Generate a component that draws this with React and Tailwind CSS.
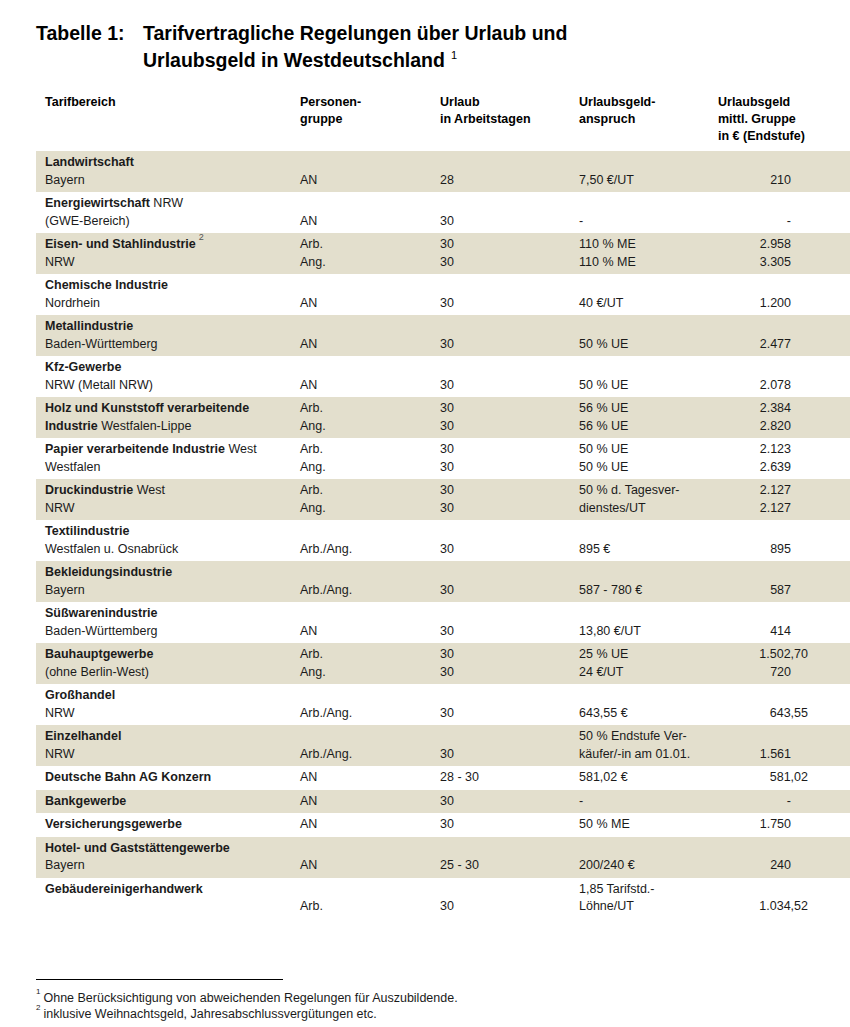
import React from "react";

const B = ({ children }) => <span className="font-bold">{children}</span>;
const Sup = ({ children }) => (
  <sup className="text-[9px] font-normal text-[#555] align-[4px] ml-[3px]">{children}</sup>
);

// each row: list of lines, each line = [tarif, gruppe, tage, anspruch, betrag]
const rows = [
  [[<B>Landwirtschaft</B>], ["Bayern", "AN", "28", "7,50 €/UT", "210"]],
  [[<><B>Energiewirtschaft</B> NRW</>], ["(GWE-Bereich)", "AN", "30", "-", "-"]],
  [
    [<><B>Eisen- und Stahlindustrie</B><Sup>2</Sup></>, "Arb.", "30", "110 % ME", "2.958"],
    ["NRW", "Ang.", "30", "110 % ME", "3.305"],
  ],
  [[<B>Chemische Industrie</B>], ["Nordrhein", "AN", "30", "40 €/UT", "1.200"]],
  [[<B>Metallindustrie</B>], ["Baden-Württemberg", "AN", "30", "50 % UE", "2.477"]],
  [[<B>Kfz-Gewerbe</B>], ["NRW (Metall NRW)", "AN", "30", "50 % UE", "2.078"]],
  [
    [<B>Holz und Kunststoff verarbeitende</B>, "Arb.", "30", "56 % UE", "2.384"],
    [<><B>Industrie</B> Westfalen-Lippe</>, "Ang.", "30", "56 % UE", "2.820"],
  ],
  [
    [<><B>Papier verarbeitende Industrie</B> West</>, "Arb.", "30", "50 % UE", "2.123"],
    ["Westfalen", "Ang.", "30", "50 % UE", "2.639"],
  ],
  [
    [<><B>Druckindustrie</B> West</>, "Arb.", "30", "50 % d. Tagesver-", "2.127"],
    ["NRW", "Ang.", "30", "dienstes/UT", "2.127"],
  ],
  [[<B>Textilindustrie</B>], ["Westfalen u. Osnabrück", "Arb./Ang.", "30", "895 €", "895"]],
  [[<B>Bekleidungsindustrie</B>], ["Bayern", "Arb./Ang.", "30", "587 - 780 €", "587"]],
  [[<B>Süßwarenindustrie</B>], ["Baden-Württemberg", "AN", "30", "13,80 €/UT", "414"]],
  [
    [<B>Bauhauptgewerbe</B>, "Arb.", "30", "25 % UE", "1.502,70"],
    ["(ohne Berlin-West)", "Ang.", "30", "24 €/UT", "720"],
  ],
  [[<B>Großhandel</B>], ["NRW", "Arb./Ang.", "30", "643,55 €", "643,55"]],
  [
    [<B>Einzelhandel</B>, "", "", "50 % Endstufe Ver-", ""],
    ["NRW", "Arb./Ang.", "30", "käufer/-in am 01.01.", "1.561"],
  ],
  [[<B>Deutsche Bahn AG Konzern</B>, "AN", "28 - 30", "581,02 €", "581,02"]],
  [[<B>Bankgewerbe</B>, "AN", "30", "-", "-"]],
  [[<B>Versicherungsgewerbe</B>, "AN", "30", "50 % ME", "1.750"]],
  [[<B>Hotel- und Gaststättengewerbe</B>], ["Bayern", "AN", "25 - 30", "200/240 €", "240"]],
  [
    [<B>Gebäudereinigerhandwerk</B>, "", "", "1,85 Tarifstd.-", ""],
    ["", "Arb.", "30", "Löhne/UT", "1.034,52"],
  ],
];

const cols = "grid grid-cols-[255px_140px_139px_139px_90px]";

function Line({ cells }) {
  const [a, b, c, d, e] = cells;
  const decimal = typeof e === "string" && e.includes(",");
  return (
    <div className={cols}>
      <div className="whitespace-nowrap">{a}</div>
      <div>{b}</div>
      <div>{c}</div>
      <div className="whitespace-nowrap">{d}</div>
      <div className={decimal ? "text-right" : "text-right pr-[17px]"}>{e}</div>
    </div>
  );
}

export default function App() {
  return (
    <div
      className="w-[850px] min-h-[1027px] bg-white text-[#1b1b1b] pt-[20px]"
      style={{ fontFamily: '"Liberation Sans", Arial, sans-serif' }}
    >
      {/* Titel */}
      <div className="flex pl-[36px] text-[19.5px] font-bold leading-[27px] text-black">
        <div className="w-[107px] shrink-0">Tabelle 1:</div>
        <div>
          Tarifvertragliche Regelungen über Urlaub und
          <br />
          Urlaubsgeld in Westdeutschland
          <sup className="text-[11px] font-normal align-[3px] ml-[6px]">1</sup>
        </div>
      </div>

      {/* Tabelle */}
      <div className="ml-[36px] mt-[20px] text-[12.5px] leading-[17px]">
        <div className={`${cols} pl-[9px] font-bold text-black pb-[6px]`}>
          <div>Tarifbereich</div>
          <div>
            Personen-
            <br />
            gruppe
          </div>
          <div>
            Urlaub
            <br />
            in Arbeitstagen
          </div>
          <div>
            Urlaubsgeld-
            <br />
            anspruch
          </div>
          <div className="whitespace-nowrap">
            Urlaubsgeld
            <br />
            mittl. Gruppe
            <br />
            in € (Endstufe)
          </div>
        </div>

        <div className="leading-[17.5px]">
          {rows.map((lines, i) => (
            <div
              key={i}
              className={
                i % 2 === 0 ? "bg-[#e3dfcd] pl-[9px] py-[3px]" : "bg-white pl-[9px] py-[3px]"
              }
            >
              {lines.map((cells, j) => (
                <Line key={j} cells={[...cells, "", "", "", "", ""].slice(0, 5)} />
              ))}
            </div>
          ))}
        </div>
      </div>

      {/* Fußnoten */}
      <div className="ml-[36px] mt-[60px]">
        <div className="w-[247px] border-t border-black" />
        <div className="mt-[10px] text-[12.5px] leading-[16px] text-[#1b1b1b]">
          <div>
            <sup className="text-[8px] align-[4px] mr-[3px]">1</sup>Ohne Berücksichtigung von
            abweichenden Regelungen für Auszubildende.
          </div>
          <div>
            <sup className="text-[8px] align-[4px] mr-[3px]">2</sup>inklusive Weihnachtsgeld,
            Jahresabschlussvergütungen etc.
          </div>
        </div>
      </div>
    </div>
  );
}
